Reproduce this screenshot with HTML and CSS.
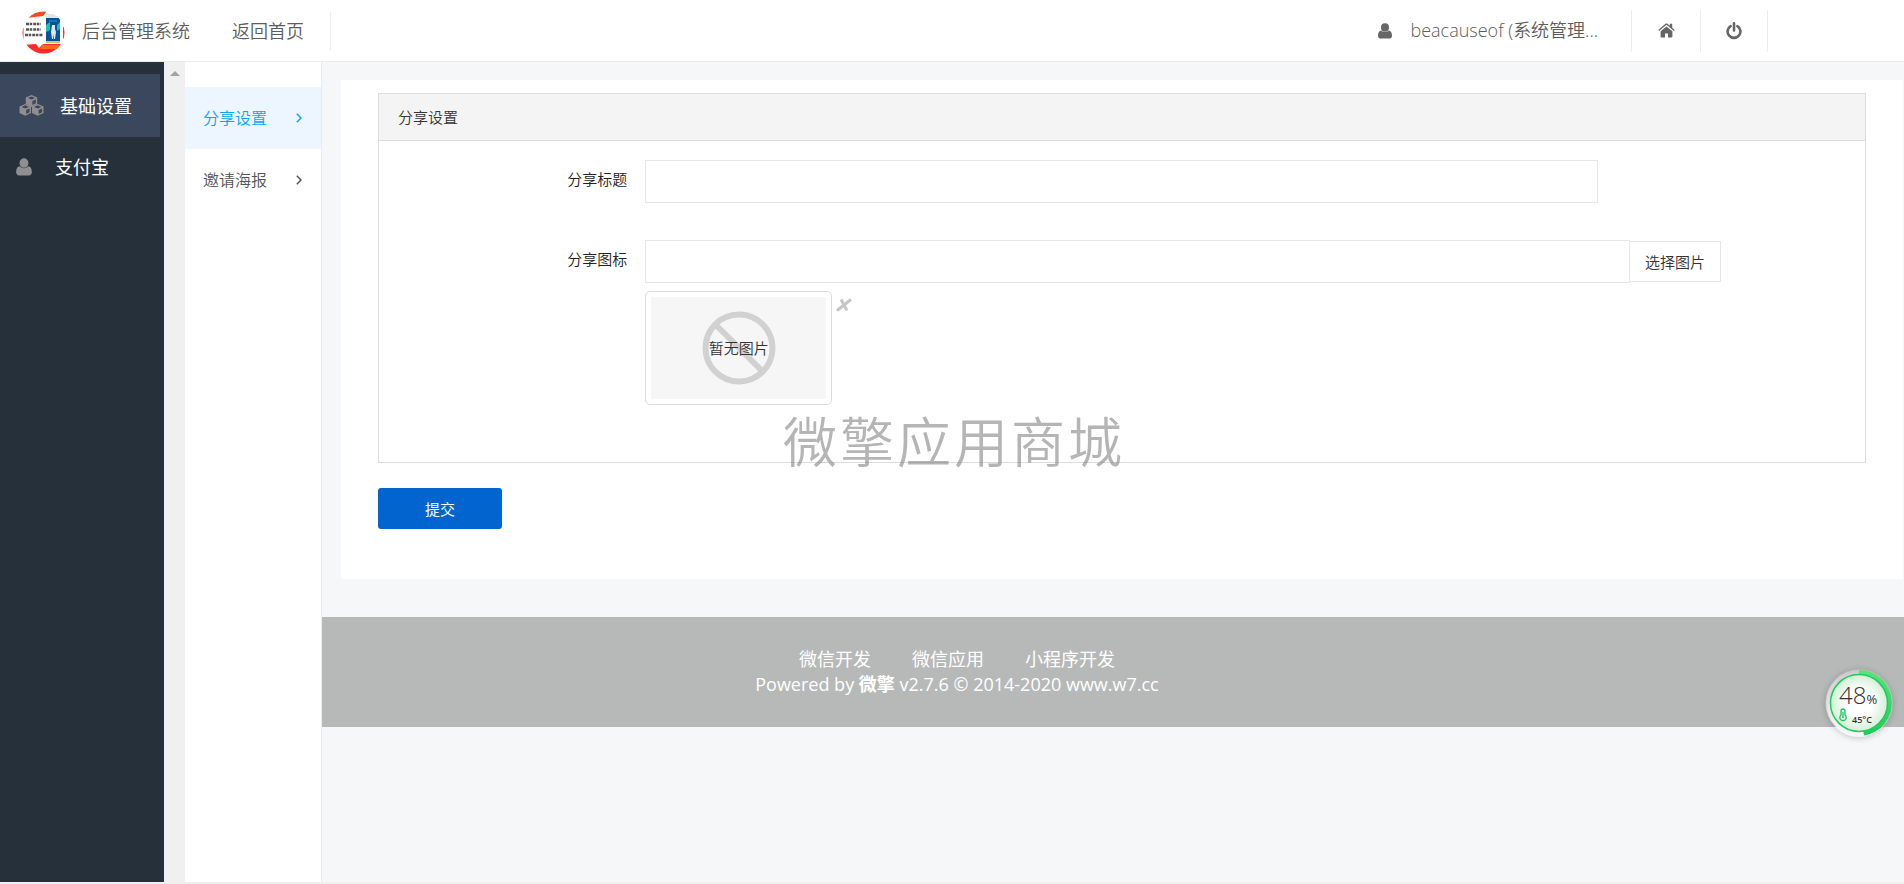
FILE: index.html
```html
<!DOCTYPE html>
<html lang="zh-CN">
<head>
<meta charset="utf-8">
<title>后台管理系统</title>
<link rel="stylesheet" href="styles.css">
</head>
<body>
<svg class="defs" aria-hidden="true">
  <symbol id="user" viewBox="0 0 14 16"><path d="M7 0.3a4 4.2 0 0 1 4 4.2a4 4.2 0 0 1-8 0A4 4.2 0 0 1 7 .3zM3.2 7.4C4.200 8.500 5.500 9.100 7 9.100s2.800-.6 3.800-1.700C13 7.600 14 9.800 14 12.700c0 1.700-1.200 2.900-2.700 2.900H2.700C1.200 15.600 0 14.400 0 12.700 0 9.800 1 7.600 3.200 7.400z"/></symbol>
  <symbol id="cube" viewBox="0 0 12 13"><path fill-rule="evenodd" d="M6 0l6 2.600v6.800L6 12.400 0 9.400V2.600zM6 1.500L2.200 3.100 6 4.700l3.800-1.600zM6.900 6.200v4.200l3.600-1.800V4.700z"/></symbol>
</svg>
<header class="topbar">
  <a class="brand" href="#">
    <svg class="logo" viewBox="0 0 43 43" role="img" aria-label="logo">
      <clipPath id="round"><circle cx="21.500" cy="21.500" r="21"/></clipPath>
      <g clip-path="url(#round)">
        <rect width="43" height="43" fill="#fff"/>
        <path d="M0 0h25l-4 5-17 2z" fill="#f9471c"/>
        <path d="M0 34l14-1 3 4 4-4h22v10H0z" fill="#fb2a2a"/>
        <path d="M20 34h19l-3 4H18z" fill="#ff6d17"/>
        <path d="M0 17h1.500v12H0zM41 16h2v12h-2z" fill="#f33"/>
        <rect x="24" y="3" width="14" height="29" fill="#dfe3ea"/>
        <rect x="24" y="7" width="14" height="23" fill="#06529b"/>
        <path d="M27 9h8v2h-8z" fill="#1277b5"/>
        <path d="M24 14l4-3v8l-4 2zM38 11l-3 3v6l3-2z" fill="#17c4b0"/>
        <path d="M30 14h3v4l1 3-1 7h-1v-5l-1 5h-1l-1-7z" fill="#dbe9f5"/>
        <path d="M24 30h14v2H24z" fill="#e4bd63"/>
        <path d="M4 13h15M4 18.500h15M3 24h18" stroke="#555" stroke-width="2.500" stroke-dasharray="3 .7 2.500 1"/>
      </g>
    </svg>
    <span>后台管理系统</span>
  </a>
  <a class="back" href="#">返回首页</a>
  <nav class="account">
    <a class="who" href="#"><svg class="i-user"><use href="#user"/></svg><span>beacauseof (系统管理...</span></a>
    <a class="tool" href="#" aria-label="首页"><svg class="i-home" viewBox="0 0 17 15"><path d="M8.500 3.400l5.900 4.900v5.200c0 .5-.4.900-.9.900H10v-4H7v4H3.500a.9.9 0 0 1-.9-.9V8.300zM8.500.4c.4 0 .7.100 1 .4l2.300 1.900V.8h2.400v3.900L16.700 7l-.8.9-7.400-6.100L1.100 7.900.3 7 7.500.8c.3-.3.600-.4 1-.4z"/></svg></a>
    <a class="tool last" href="#" aria-label="退出"><svg class="i-power" viewBox="0 0 16 18"><path d="M4.600 4.100a6.400 6.400 0 1 0 6.800 0M8 1.400v7" fill="none" stroke="#666" stroke-width="2.600" stroke-linecap="round"/></svg></a>
  </nav>
</header>
<div class="shell">
  <nav class="sidebar">
    <a class="side-item active" href="#"><svg class="i-cubes" viewBox="0 0 24 21"><use href="#cube" x="6" y="0" width="12" height="12"/><use href="#cube" x="0" y="8.500" width="12" height="12"/><use href="#cube" x="12" y="8.500" width="12" height="12"/></svg>基础设置</a>
    <a class="side-item" href="#"><svg class="i-pay"><use href="#user"/></svg>支付宝</a>
  </nav>
  <div class="gutter"><span class="arrow"></span></div>
  <nav class="submenu">
    <a class="sub-item active" href="#">分享设置<svg class="chev" viewBox="0 0 6 10"><path d="M.8.8L5 5 .8 9.200"/></svg></a>
    <a class="sub-item" href="#">邀请海报<svg class="chev" viewBox="0 0 6 10"><path d="M.8.8L5 5 .8 9.200"/></svg></a>
  </nav>
  <div class="content">
    <main class="card">
      <form>
        <section class="panel">
          <h1 class="panel-title">分享设置</h1>
          <div class="panel-body">
            <div class="row">
              <label for="title">分享标题</label>
              <input class="field short" id="title" type="text">
            </div>
            <div class="row">
              <label for="icon">分享图标</label>
              <div class="picker">
                <div class="group"><input class="field" id="icon" type="text"><button class="choose" type="button">选择图片</button></div>
                <div class="preview">
                  <div class="thumb"><div class="empty">
                    <svg class="ban" viewBox="0 0 74 74"><circle cx="37" cy="37" r="33.500"/><path d="M13 13l48 48"/></svg>
                    <span>暂无图片</span>
                  </div></div>
                  <button class="remove" type="button" aria-label="删除"><svg viewBox="0 0 16 14"><path d="M1 12.500L15 1.500M5 1.500l6 11"/></svg></button>
                </div>
              </div>
            </div>
          </div>
        </section>
        <button class="submit" type="submit">提交</button>
      </form>
    </main>
    <footer class="footer">
      <div class="links"><a href="#">微信开发</a><a href="#">微信应用</a><a href="#">小程序开发</a></div>
      <div>Powered by <b>微擎</b> v2.7.6 © 2014-2020 www.w7.cc</div>
    </footer>
  </div>
</div>
<div class="watermark">微擎应用商城</div>
<div class="meter">
  <svg class="ring" viewBox="0 0 68 68">
    <defs>
      <radialGradient id="face"><stop offset=".45" stop-color="#fff"/><stop offset="1" stop-color="#d3efd6"/></radialGradient>
      <linearGradient id="arc" x2="0" y2="1"><stop offset="0" stop-color="#5be37a"/><stop offset="1" stop-color="#1fca5a"/></linearGradient>
      <linearGradient id="track" x2="0" y2="1"><stop offset="0" stop-color="#c9cac9"/><stop offset="1" stop-color="#fafafa"/></linearGradient>
    </defs>
    <circle cx="34" cy="34" r="33" fill="url(#track)"/>
    <path d="M34 1a33 33 0 0 1 5 65.600L34 34z" fill="url(#arc)"/>
    <circle cx="34" cy="34" r="28.500" fill="url(#face)" stroke="#17cf5c" stroke-width="1.500"/>
    <path d="M16 46v-4a2 2 0 0 1 4 0v4a3.200 3.200 0 1 1-4 0zM18 43v6" fill="none" stroke="#20c45c" stroke-width="1.300"/>
  </svg>
  <div class="load">48<small>%</small></div>
  <div class="temp">45°C</div>
</div>
</body>
</html>
```
FILE: styles.css
```css
* { box-sizing: border-box; }
body {
  margin: 0;
  min-height: 100vh;
  display: flex;
  flex-direction: column;
  background: #f0f0f0;
  color: #333;
  font: 350 15px/20px "Open Sans", "Noto Sans CJK SC", sans-serif;
}
a { color: inherit; text-decoration: none; }
button, input { font: inherit; color: inherit; }
svg { flex: none; }
.defs { position: absolute; width: 0; height: 0; }

.topbar {
  display: flex;
  align-items: center;
  height: 62px;
  padding-left: 22px;
  background: #fff;
  border-bottom: 1px solid #ededed;
  color: #5c5c5c;
  font-size: 18px;
}
.brand { display: flex; align-items: center; gap: 17px; }
.logo { width: 43px; height: 43px; margin-top: 4px; }
.back {
  margin-left: 42px;
  padding-right: 26px;
  line-height: 38px;
  border-right: 1px solid #ededed;
}
.account { display: flex; align-items: center; margin-left: auto; margin-right: 136px; }
.who { display: flex; align-items: center; gap: 18px; height: 42px; padding-right: 33px; }
.who span { padding-bottom: 2px; }
.i-user { width: 14px; height: 16px; fill: #666; }
.tool {
  display: flex;
  align-items: center;
  justify-content: center;
  width: 69px;
  height: 42px;
  border-left: 1px solid #ededed;
}
.tool.last { border-right: 1px solid #ededed; width: 68px; }
.i-home { width: 17px; height: 15px; fill: #666; }
.i-power { width: 16px; height: 18px; }

.shell { flex: 1; display: flex; margin-bottom: 2px; }
.sidebar { width: 164px; padding-top: 12px; background: #25303b; }
.side-item {
  display: flex;
  align-items: center;
  gap: 23px;
  height: 60px;
  padding-left: 16px;
  color: #fff;
  font-size: 18px;
  font-weight: 400;
}
.side-item.active { gap: 16px; width: 160px; height: 63px; padding-left: 19px; background: #3a475c; }
.i-cubes { width: 25px; height: 22px; fill: #8f8f8f; }
.i-pay { width: 16px; height: 18px; fill: #8f8f8f; }
.gutter { display: flex; justify-content: center; width: 21px; padding-top: 9px; }
.arrow { width: 0; height: 0; border: 5px solid transparent; border-top: 0; border-bottom-color: #a3a3a3; }
.submenu { width: 137px; padding-top: 25px; background: #fff; border-right: 1px solid #e9ebee; }
.sub-item {
  display: flex;
  align-items: center;
  justify-content: space-between;
  height: 62px;
  padding: 0 19px 0 18px;
  color: #555;
  font-size: 16px;
}
.sub-item.active { color: #0aa5f5; background: #edf5ff; }
.chev { width: 6px; height: 10px; fill: none; stroke: currentColor; stroke-width: 1.5; }

.content { flex: 1; min-width: 0; background: #f5f7f9; }
.card { margin: 18px 1px 38px 19px; padding: 13px 37px 50px; background: #fff; }
.panel { border: 1px solid #dcdcdc; }
.panel-title {
  margin: 0;
  padding: 13px 19px;
  border-bottom: 1px solid #dcdcdc;
  background: #f4f4f4;
  font-size: 15px;
  font-weight: 350;
  line-height: 20px;
}
.panel-body { padding: 19px 0 57px; }
.row { display: flex; align-items: flex-start; gap: 18px; }
.row + .row { margin-top: 37px; }
.row label { width: 16.7%; padding-top: 9px; text-align: right; color: #222; }
.field { height: 43px; padding: 0 12px; border: 1px solid #e7e7e7; border-radius: 0; background: #fff; }
.short { width: 64.1%; }
.picker { width: 72.4%; }
.group { display: flex; align-items: center; }
.group .field { flex: 1; min-width: 0; }
.choose { height: 41px; padding: 0 15px; border: 1px solid #e7e7e7; border-left: 0; background: #fff; white-space: nowrap; }
.preview { display: flex; align-items: flex-start; gap: 4px; margin-top: 8px; }
.thumb { padding: 5px; border: 1px solid #dcdcdc; border-radius: 5px; }
.empty { display: grid; place-items: center; width: 175px; height: 102px; background: #f6f6f6; }
.empty > * { grid-area: 1 / 1; }
.ban { width: 74px; height: 74px; fill: none; stroke: #d1d1d1; stroke-width: 6; }
.remove { padding: 0; border: 0; background: none; margin-top: 7px; line-height: 0; }
.remove svg { width: 16px; height: 14px; fill: none; stroke: #c6c6c6; stroke-width: 3; }
.submit {
  display: block;
  width: 124px;
  height: 41px;
  margin-top: 25px;
  border: 0;
  border-radius: 3px;
  background: #0265cf;
  color: #fff;
  font-weight: 400;
}
.footer {
  padding: 30px 312px 30px 0;
  background: #b7b9b8;
  color: #fff;
  font-size: 18px;
  font-weight: 400;
  line-height: 25px;
  text-align: center;
}
.links { display: flex; justify-content: center; gap: 41px; }

.watermark {
  position: absolute;
  top: 406px;
  left: 4px;
  right: 0;
  color: rgba(120, 120, 120, .55);
  font-size: 54px;
  line-height: 72px;
  letter-spacing: 3px;
  text-align: center;
  pointer-events: none;
}
.meter { position: absolute; top: 669px; right: 11px; width: 68px; height: 68px; color: #333; border-radius: 50%; box-shadow: 0 1px 6px rgba(0, 0, 0, .2); }
.ring { position: absolute; inset: 0; width: 68px; height: 68px; }
.load { position: relative; padding: 12px 0 0 14px; font-size: 24px; font-weight: 300; line-height: 28px; white-space: nowrap; }
.load small { font-size: 13px; font-weight: 400; }
.temp { position: relative; padding-left: 27px; font-size: 9px; line-height: 14px; font-weight: 600; }
```
